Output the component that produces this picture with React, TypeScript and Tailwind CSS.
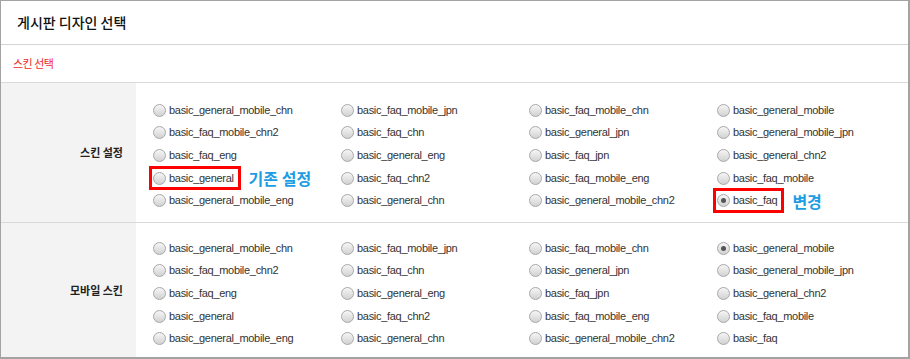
import React from "react";

const SKINS = [
  "basic_general_mobile_chn",
  "basic_faq_mobile_jpn",
  "basic_faq_mobile_chn",
  "basic_general_mobile",
  "basic_faq_mobile_chn2",
  "basic_faq_chn",
  "basic_general_jpn",
  "basic_general_mobile_jpn",
  "basic_faq_eng",
  "basic_general_eng",
  "basic_faq_jpn",
  "basic_general_chn2",
  "basic_general",
  "basic_faq_chn2",
  "basic_faq_mobile_eng",
  "basic_faq_mobile",
  "basic_general_mobile_eng",
  "basic_general_chn",
  "basic_general_mobile_chn2",
  "basic_faq",
];

const KR = { fontFamily: '"Noto Sans CJK KR", "Liberation Sans", sans-serif' };
const EN = { fontFamily: '"Liberation Sans", Arial, sans-serif' };

function Radio({ checked }: { checked?: boolean }) {
  return (
    <span className="relative inline-flex items-center justify-center w-[13px] h-[13px] shrink-0 rounded-full border border-[#a8a8a8] bg-linear-to-b from-[#f6f6f6] to-[#d2d2d2]">
      {checked && <span className="w-[5px] h-[5px] rounded-full bg-[#555]" />}
    </span>
  );
}

interface OptionProps {
  name: string;
  checked?: boolean;
  boxed?: boolean;
  note?: string;
}

function Option({ name, checked, boxed, note }: OptionProps) {
  return (
    <div className="flex items-center h-full">
      <span className="relative flex items-center h-full">
        <Radio checked={checked} />
        <span
          className="ml-[3px] text-[11px] tracking-[-0.3px] text-[#333] leading-none"
          style={EN}
        >
          {name}
        </span>
        {boxed && (
          <span className="absolute -left-[4px] -right-[7px] -top-[1px] -bottom-[1px] border-[3px] border-[#ff0000]" />
        )}
      </span>
      {note && (
        <span
          className="ml-[15px] text-[16px] font-bold text-[#1c9de4] leading-none"
          style={KR}
        >
          {note}
        </span>
      )}
    </div>
  );
}

interface RowProps {
  label: string;
  selected: string;
  boxed?: string[];
  notes?: Record<string, string>;
  pad: string;
  last?: boolean;
}

function SkinRow({ label, selected, boxed = [], notes, pad, last }: RowProps) {
  return (
    <div className={`flex ${last ? "flex-1" : "border-b border-[#d9d9d9]"}`}>
      <div className="w-[135px] shrink-0 bg-[#f3f3f3] flex items-center justify-end pr-[13px]">
        <span className="text-[11px] font-bold text-[#222]" style={KR}>
          {label}
        </span>
      </div>
      <div className={`flex-1 bg-white pl-[17px] ${pad}`}>
        <div className="grid grid-cols-[188px_188px_188px_188px] auto-rows-[22.6px]">
          {SKINS.map((s) => (
            <Option
              key={s}
              name={s}
              checked={s === selected}
              boxed={boxed.includes(s)}
              note={notes?.[s]}
            />
          ))}
        </div>
      </div>
    </div>
  );
}

export default function App() {
  return (
    <div className="w-[910px] h-[359px] bg-white">
      <div className="h-full border-t border-l border-r-2 border-b-2 border-[#a3a3a3] flex flex-col">
        <div className="h-[44px] border-b border-[#d4d4d4] flex items-center pl-[16px]">
          <h1 className="text-[14px] font-medium text-[#111]" style={KR}>
            게시판 디자인 선택
          </h1>
        </div>
        <div className="h-[38px] border-b border-[#d9d9d9] flex items-center pl-[12px]">
          <span className="text-[11px] tracking-[-0.5px] text-[#ee2a2a]" style={KR}>
            스킨 선택
          </span>
        </div>
        {/* skin setting */}
        <SkinRow
          label="스킨 설정"
          selected="basic_faq"
          boxed={["basic_general", "basic_faq"]}
          notes={{ basic_general: "기존 설정", basic_faq: "변경" }}
          pad="pt-[16px] pb-[10px]"
        />
        {/* mobile skin */}
        <SkinRow
          label="모바일 스킨"
          selected="basic_general_mobile"
          pad="pt-[14px] pb-[6px]"
          last
        />
      </div>
    </div>
  );
}
